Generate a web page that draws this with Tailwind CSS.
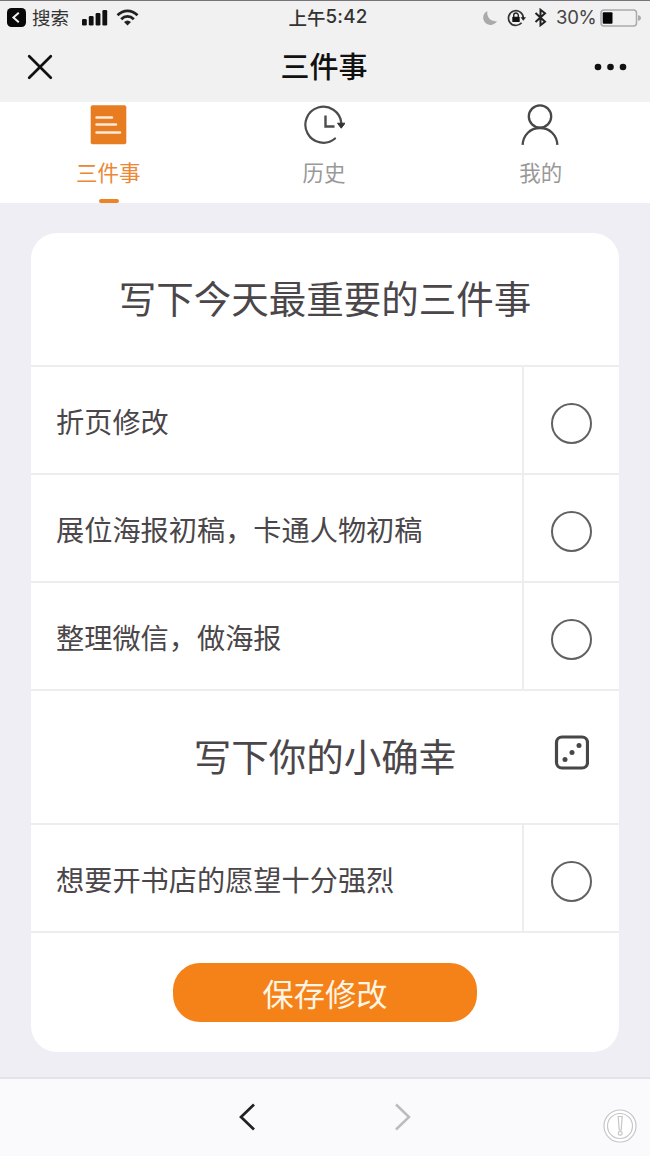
<!DOCTYPE html>
<html lang="zh-CN">
<head>
<meta charset="utf-8">
<meta name="viewport" content="width=device-width, initial-scale=1">
<title>三件事</title>
<script src="https://cdn.jsdelivr.net/npm/@tailwindcss/browser@4"></script>
</head>
<body class="flex h-[1156px] w-[650px] flex-col overflow-hidden bg-[#efeef4] font-['Noto_Sans_CJK_SC',sans-serif] text-[#4a4649]">
  <header class="h-[102px] shrink-0 border-t border-[#77747a] bg-[#f1f1f1] text-[#111]">
    <div class="grid h-[33px] grid-cols-3 items-center text-[18px] leading-none text-[#333]">
      <div class="flex items-center pl-[7px]">
        <svg class="h-[19px] w-[19px]" viewBox="0 0 19 19"><rect width="19" height="19" rx="4.5" fill="#080808"/><path d="M11.8 4.7 6.4 9.5l5.4 4.8" fill="none" stroke="#f1f1f1" stroke-width="2"/></svg>
        <span class="ml-[6px] w-[37px] text-[18.5px]">搜索</span>
        <svg class="ml-[12px] h-[17px] w-[27px]" viewBox="0 0 27 17" fill="#111"><rect x="1" y="10" width="4.8" height="6.5" rx="1.3"/><rect x="7.8" y="7" width="4.8" height="9.5" rx="1.3"/><rect x="14.600" y="4" width="4.8" height="12.5" rx="1.3"/><rect x="21.4" y="1" width="4.8" height="15.5" rx="1.3"/></svg>
        <svg class="ml-[8px] h-[17px] w-[23px]" viewBox="0 0 23 17" fill="none" stroke="#222" stroke-width="2.8"><path d="M1.5 6.2Q6 1.8 11.5 1.8T21.5 6.2"/><path d="M5.2 10.2Q8 7.4 11.5 7.4T17.8 10.2"/><path d="M8 13Q11.5 10 15 13L11.5 16.5Z" fill="#222" stroke="none"/></svg>
      </div>
      <div class="flex items-center justify-center pb-[1px] pl-[6px] font-medium"><span class="text-[18.5px]">上午</span><span class="font-[Inter,sans-serif] text-[18.8px] tracking-[0.2px]">5:42</span></div>
      <div class="flex items-center justify-end pr-[9px]">
        <svg class="h-[16px] w-[16px]" viewBox="0 0 16 16"><path d="M5.5 1A7.300 7.300 0 1 0 15 11A8.100 8.100 0 0 1 5.500 1Z" fill="#aaa"/></svg>
        <svg class="ml-[9px] h-[18px] w-[19px]" viewBox="0 0 19 18"><path d="M14.600 13.800A7.400 7.400 0 1 1 16.300 9" fill="none" stroke="#333" stroke-width="1.700"/><path d="M13.500 8.200H19L16.300 11.700Z" fill="#222"/><rect x="5.300" y="7.800" width="7.400" height="5.200" rx=".6" fill="#111"/><path d="M6.700 8V6.300a2.300 2.300 0 0 1 4.600 0V8" fill="none" stroke="#222" stroke-width="1.400"/></svg>
        <svg class="ml-[8px] h-[19px] w-[13px]" viewBox="0 0 13 19" fill="none" stroke="#222" stroke-width="2"><path d="M1.500 5 11 13.700 6.500 17.200V1.800L11 5.300 1.500 14"/></svg>
        <span class="ml-[9px] w-[40px] font-[Inter,sans-serif] text-[18.500px] tracking-[-0.3px] text-[#444]">30%</span>
        <svg class="ml-[4px] h-[18px] w-[41px]" viewBox="0 0 41 18"><rect x="1" y="1" width="35.500" height="16" rx="3" fill="none" stroke="#aaa" stroke-width="1.500"/><rect x="2.700" y="3.300" width="9.800" height="11.400" rx="1" fill="#050505"/><path d="M38 6.200q3 .5 3 2.800t-3 2.800Z" fill="#aaa"/></svg>
      </div>
    </div>
    <div class="grid h-[66px] grid-cols-[100px_1fr_100px] items-center">
      <svg class="ml-[27px] h-[26px] w-[26px]" viewBox="0 0 26 26" fill="none" stroke="#111" stroke-width="2.700" stroke-linecap="round"><path d="M2.200 2.200 23.800 23.800M23.800 2.200 2.200 23.800"/></svg>
      <h1 class="pr-[2px] pb-[3px] text-center text-[29px] leading-none font-medium">三件事</h1>
      <svg class="ml-[44px] h-[8px] w-[34px]" viewBox="0 0 34 8" fill="#111"><circle cx="4" cy="4" r="3.300"/><circle cx="16.500" cy="4" r="3.300"/><circle cx="29" cy="4" r="3.300"/></svg>
    </div>
  </header>

  <nav class="grid h-[101px] shrink-0 grid-cols-3 bg-white text-[21.500px] leading-none text-[#999]">
    <a class="flex flex-col items-center pt-[2px] text-[#ec8734]">
      <svg class="h-[42px] w-[42px]" viewBox="0 0 42 42"><rect x="3.700" y="1.200" width="35.600" height="39" rx="2" fill="#e87c20"/><path d="M9.500 13.500H25M9.500 20.500H29M9.500 28.500H33" stroke="#fce9d9" stroke-width="2.500" stroke-linecap="round"/></svg>
      <span class="mt-[15px]">三件事</span>
      <span class="mt-[16px] ml-[1px] h-[4px] w-[20px] rounded-full bg-[#ec8427]"></span>
    </a>
    <a class="flex flex-col items-center pt-[2px] pr-[2px]">
      <svg class="h-[42px] w-[42px]" viewBox="0 0 42 42" fill="none" stroke="#4c4c4c" stroke-width="2.200"><path d="M32 34.500A18 18 0 1 1 38.300 19" stroke-linecap="round"/><path d="M34.500 19.200H42L38.200 24.200Z" fill="#333" stroke="#333" stroke-width="1"/><path d="M22.500 11.500V22.500H31.500" stroke-width="2.400"/></svg>
      <span class="mt-[15px]">历史</span>
    </a>
    <a class="flex flex-col items-center pt-[2px] pr-[2px]">
      <svg class="h-[42px] w-[42px]" viewBox="0 0 42 42" fill="none" stroke="#484848" stroke-width="2.300"><circle cx="20" cy="12.500" r="11.200"/><path d="M2.600 40.800C3.300 31 10.200 24 20 24S36.700 31 37.400 40.800"/></svg>
      <span class="mt-[15px]">我的</span>
    </a>
  </nav>

  <main class="flex-1 px-[31px] pt-[30px]">
    <section class="h-[819px] w-[588px] overflow-hidden rounded-[26px] bg-white">
      <h2 class="flex h-[132px] items-center justify-center pb-[4px] text-[37.500px] leading-none">写下今天最重要的三件事</h2>
      <div class="flex h-[108px] border-t-2 border-[#ededed]">
        <p class="flex flex-1 items-center border-r-2 border-[#ededed] pt-[2px] pl-[25px] text-[28.200px] leading-none">折页修改</p>
        <div class="flex w-[95px] items-center justify-center pt-[6px] pr-[1px]"><span class="h-[41px] w-[41px] rounded-full border-2 border-[#626062]"></span></div>
      </div>
      <div class="flex h-[108px] border-t-2 border-[#ededed]">
        <p class="flex flex-1 items-center border-r-2 border-[#ededed] pt-[2px] pl-[25px] text-[28.200px] leading-none">展位海报初稿，卡通人物初稿</p>
        <div class="flex w-[95px] items-center justify-center pt-[6px] pr-[1px]"><span class="h-[41px] w-[41px] rounded-full border-2 border-[#626062]"></span></div>
      </div>
      <div class="flex h-[108px] border-t-2 border-[#ededed]">
        <p class="flex flex-1 items-center border-r-2 border-[#ededed] pt-[2px] pl-[25px] text-[28.200px] leading-none">整理微信，做海报</p>
        <div class="flex w-[95px] items-center justify-center pt-[6px] pr-[1px]"><span class="h-[41px] w-[41px] rounded-full border-2 border-[#626062]"></span></div>
      </div>
      <div class="grid h-[134px] grid-cols-[95px_1fr_95px] items-center border-t-2 border-[#ededed]">
        <h2 class="col-start-2 pb-[4px] text-center text-[37.500px] leading-none">写下你的小确幸</h2>
        <svg class="mb-[10px] ml-[30px] h-[35px] w-[35px]" viewBox="0 0 35 35"><rect x="2.500" y="2" width="31" height="31" rx="5.500" fill="none" stroke="#484648" stroke-width="3.200"/><g fill="#484648"><circle cx="11" cy="24.500" r="2.500"/><circle cx="18" cy="17.500" r="2.500"/><circle cx="25" cy="10.500" r="2.500"/></g></svg>
      </div>
      <div class="flex h-[108px] border-t-2 border-[#ededed]">
        <p class="flex flex-1 items-center border-r-2 border-[#ededed] pt-[2px] pl-[25px] text-[28.200px] leading-none">想要开书店的愿望十分强烈</p>
        <div class="flex w-[95px] items-center justify-center pt-[6px] pr-[1px]"><span class="h-[41px] w-[41px] rounded-full border-2 border-[#626062]"></span></div>
      </div>
      <div class="flex justify-center border-t-2 border-[#ededed] pt-[30px]">
        <button class="h-[59px] w-[304px] rounded-[27px] bg-[#f58218] text-[31.200px] leading-none text-[#fff5e6]">保存修改</button>
      </div>
    </section>
  </main>

  <footer class="flex h-[79px] shrink-0 items-center border-t-2 border-[#e4e3e8] bg-[#fafafc] pb-[2px]">
    <svg class="ml-[238px] h-[28px] w-[18px]" viewBox="0 0 18 28" fill="none" stroke="#222" stroke-width="2.700"><path d="M16 1.500 3 14 16 26.500"/></svg>
    <svg class="ml-[138px] h-[28px] w-[18px]" viewBox="0 0 18 28" fill="none" stroke="#bcbcbe" stroke-width="2.500"><path d="M2 1.500 15 14 2 26.500"/></svg>
    <svg class="mt-[18px] ml-[191px] h-[34px] w-[34px]" viewBox="0 0 34 34" fill="#fff" stroke="#c6c6c8" stroke-width="1.200"><circle cx="17" cy="17" r="16"/><circle cx="17" cy="17" r="12.500"/><path d="M15.200 7.500h4l-1 13.500h-2Z"/><circle cx="17.200" cy="24.300" r="1.900"/></svg>
  </footer>
</body>
</html>
